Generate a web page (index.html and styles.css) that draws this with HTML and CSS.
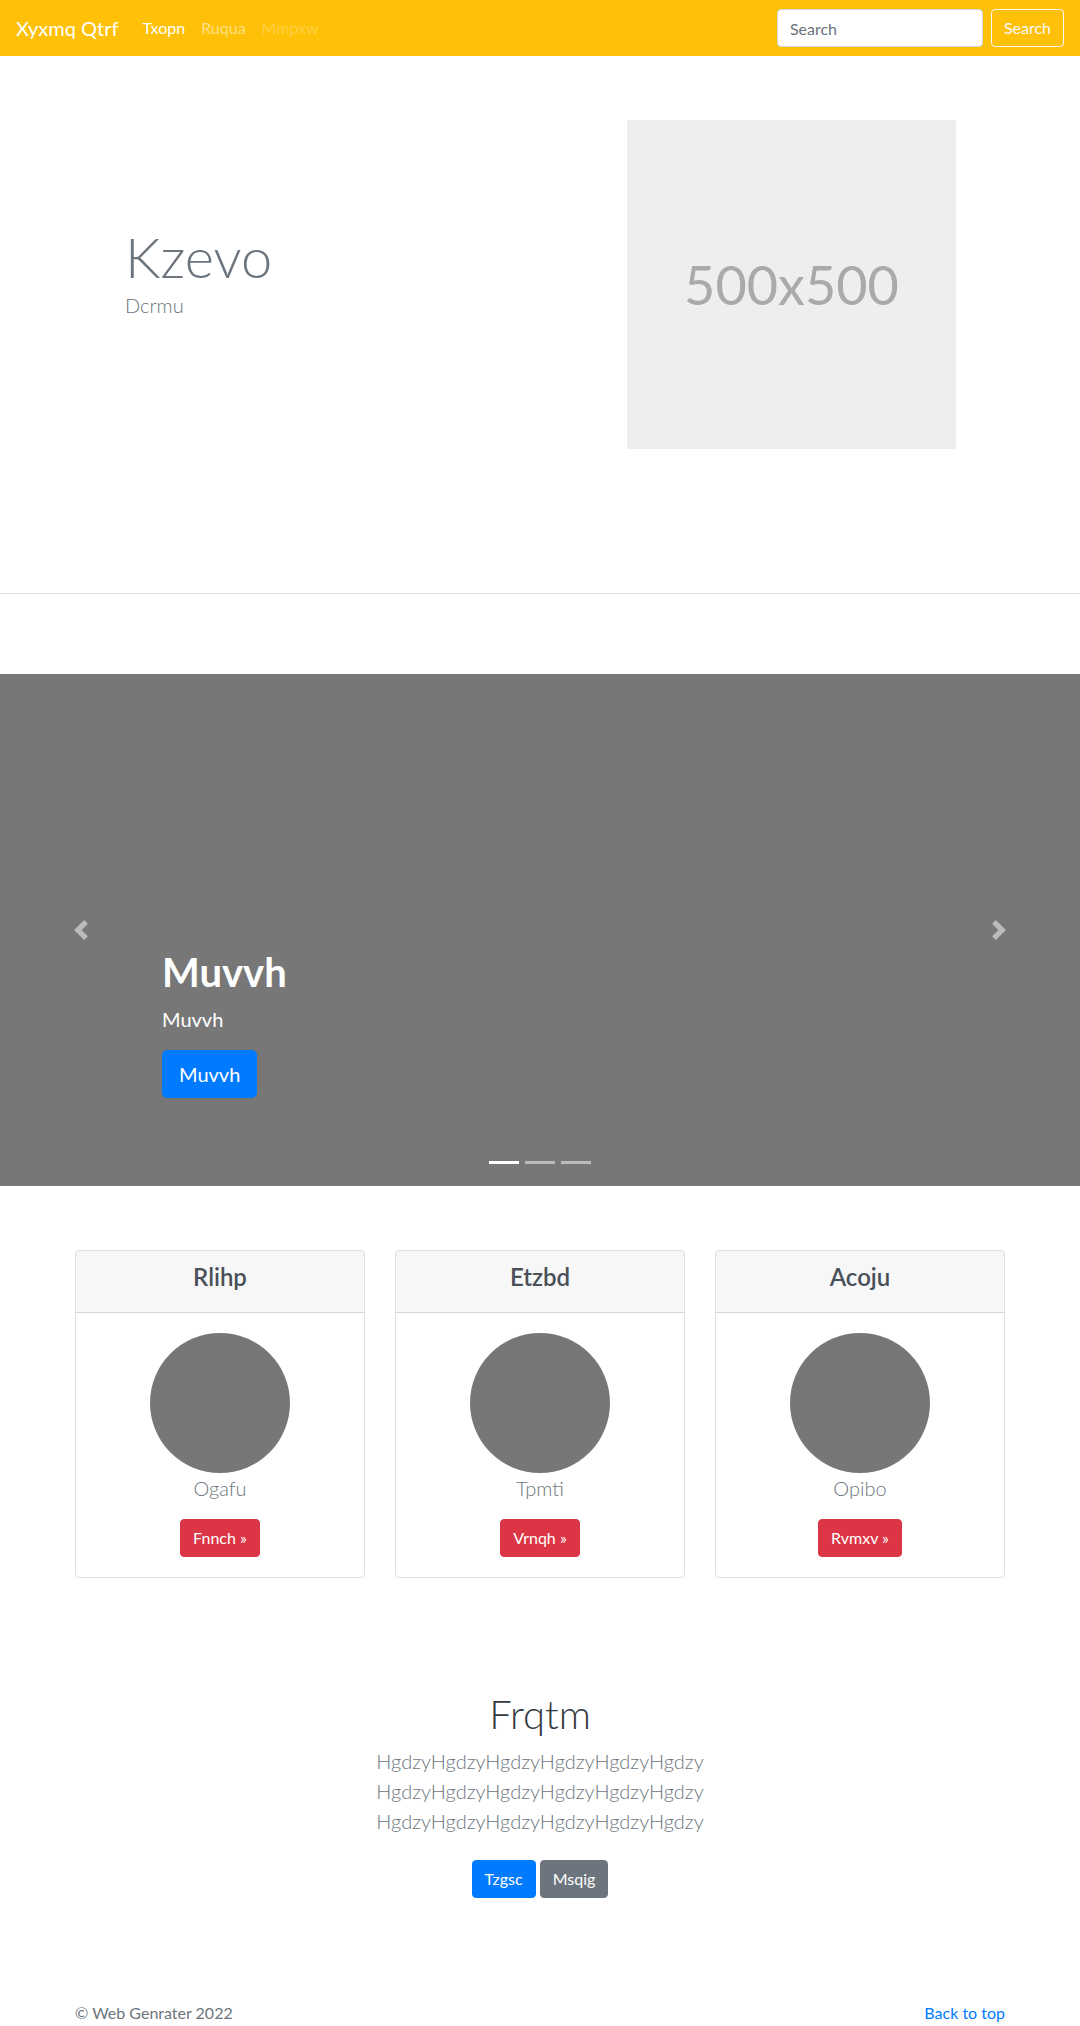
FILE: index.html
```html
<!DOCTYPE html>
<html lang="en">
<head>
<meta charset="utf-8">
<title>Xyxmq Qtrf</title>
<link rel="stylesheet" href="styles.css">
</head>
<body>
<nav class="navbar">
  <a class="brand" href="#">Xyxmq Qtrf</a>
  <ul class="nav-links">
    <li><a class="nav-link active" href="#">Txopn</a></li>
    <li><a class="nav-link" href="#">Ruqua</a></li>
    <li><a class="nav-link disabled" href="#">Mmpxw</a></li>
  </ul>
  <form class="search-form">
    <input class="search-input" type="text" placeholder="Search">
    <button class="btn btn-outline-light" type="button">Search</button>
  </form>
</nav>

<section class="hero">
  <div class="hero-row">
    <div class="hero-text">
      <h1 class="hero-title">Kzevo</h1>
      <p class="hero-lead">Dcrmu</p>
    </div>
    <div class="hero-media">
      <div class="placeholder">500x500</div>
    </div>
  </div>
</section>

<div class="carousel">
  <div class="carousel-item">
    <div class="carousel-caption">
      <h1 class="caption-title">Muvvh</h1>
      <p class="caption-text">Muvvh</p>
      <p class="caption-action"><a class="btn btn-lg btn-primary" href="#">Muvvh</a></p>
    </div>
  </div>
  <ol class="indicators">
    <li class="active"></li>
    <li></li>
    <li></li>
  </ol>
  <a class="control control-prev" href="#">
    <svg width="20" height="20" viewBox="0 0 8 8" fill="#fff"><path d="M5.25 0l-4 4 4 4 1.5-1.5L4.25 4l2.5-2.5L5.25 0z"/></svg>
  </a>
  <a class="control control-next" href="#">
    <svg width="20" height="20" viewBox="0 0 8 8" fill="#fff"><path d="M2.75 0l-1.5 1.5L3.75 4l-2.5 2.5L2.75 8l4-4-4-4z"/></svg>
  </a>
</div>

<div class="container">
  <div class="card-deck">
    <div class="card">
      <div class="card-header"><h4 class="card-title">Rlihp</h4></div>
      <div class="card-body">
        <div class="avatar"></div>
        <p class="card-lead">Ogafu</p>
        <a class="btn btn-danger" href="#">Fnnch &raquo;</a>
      </div>
    </div>
    <div class="card">
      <div class="card-header"><h4 class="card-title">Etzbd</h4></div>
      <div class="card-body">
        <div class="avatar"></div>
        <p class="card-lead">Tpmti</p>
        <a class="btn btn-danger" href="#">Vrnqh &raquo;</a>
      </div>
    </div>
    <div class="card">
      <div class="card-header"><h4 class="card-title">Acoju</h4></div>
      <div class="card-body">
        <div class="avatar"></div>
        <p class="card-lead">Opibo</p>
        <a class="btn btn-danger" href="#">Rvmxv &raquo;</a>
      </div>
    </div>
  </div>
</div>

<section class="jumbotron">
  <h1 class="jumbo-title">Frqtm</h1>
  <p class="jumbo-lead">HgdzyHgdzyHgdzyHgdzyHgdzyHgdzy<br>HgdzyHgdzyHgdzyHgdzyHgdzyHgdzy<br>HgdzyHgdzyHgdzyHgdzyHgdzyHgdzy</p>
  <p class="jumbo-actions">
    <a class="btn btn-primary" href="#">Tzgsc</a>
    <a class="btn btn-secondary" href="#">Msqig</a>
  </p>
</section>

<footer class="footer">
  <p class="copyright">&copy; Web Genrater 2022</p>
  <a class="back-top" href="#">Back to top</a>
</footer>
</body>
</html>
```

FILE: styles.css
```css
* { box-sizing: border-box; }

body {
  margin: 0;
  font-family: "Lato", "Noto Sans", sans-serif;
  font-size: 16px;
  line-height: 1.5;
  color: #212529;
  background: #fff;
}

a { text-decoration: none; }

/* Navbar */
.navbar {
  display: flex;
  align-items: center;
  height: 56px;
  padding: 8px 16px;
  background: #ffc107;
}
.brand {
  font-size: 20px;
  line-height: 30px;
  color: #fff;
  margin-right: 16px;
  padding: 5px 0;
}
.nav-links {
  display: flex;
  list-style: none;
  margin: 0;
  padding: 0;
  flex: 1;
}
.nav-link {
  display: block;
  padding: 8px;
  color: rgba(255,255,255,.5);
}
.nav-link.active { color: #fff; }
.nav-link.disabled { color: rgba(255,255,255,.25); }

.search-form {
  display: flex;
  align-items: center;
}
.search-input {
  width: 206px;
  height: 38px;
  padding: 6px 12px;
  font-family: inherit;
  font-size: 16px;
  color: #495057;
  background: #fff;
  border: 1px solid #ced4da;
  border-radius: 4px;
  margin-right: 8px;
}
.search-input::placeholder { color: #6c757d; }

.btn {
  display: inline-block;
  font-family: inherit;
  font-size: 16px;
  line-height: 24px;
  padding: 6px 12px;
  border: 1px solid transparent;
  border-radius: 4px;
  color: #fff;
  text-align: center;
  vertical-align: middle;
}
.btn-outline-light {
  background: transparent;
  color: #f8f9fa;
  border-color: #f8f9fa;
}
.btn-primary { background: #007bff; border-color: #007bff; }
.btn-secondary { background: #6c757d; border-color: #6c757d; }
.btn-danger { background: #dc3545; border-color: #dc3545; }
.btn-lg {
  font-size: 20px;
  line-height: 30px;
  padding: 8px 16px;
  border-radius: 5px;
}

/* Hero */
.hero {
  padding: 64px 0 144px;
  border-bottom: 1px solid #e3e3e3;
}
.hero-row {
  width: 930px;
  margin: 0 auto;
  display: grid;
  grid-template-columns: 465px 465px;
  align-items: center;
}
.hero-text {
  padding-left: 50px;
  padding-bottom: 26px;
}
.hero-title {
  margin: 0;
  font-size: 56px;
  font-weight: 300;
  line-height: 1.2;
  color: #6c757d;
}
.hero-lead {
  margin: 0;
  font-size: 20px;
  font-weight: 300;
  color: #6c757d;
}
.hero-media { padding-left: 87px; }
.placeholder {
  width: 329px;
  height: 329px;
  background: #eee;
  color: #aaa;
  display: flex;
  align-items: center;
  justify-content: center;
  font-size: 54px;
}

/* Carousel */
.carousel {
  position: relative;
  margin-top: 80px;
  height: 512px;
  background: #777;
}
.carousel-item {
  height: 100%;
}
.carousel-caption {
  position: absolute;
  left: 15%;
  right: 15%;
  bottom: 52px;
  padding: 20px 0;
  color: #fff;
  text-align: left;
  z-index: 10;
}
.caption-title {
  margin: 0 0 8px;
  font-size: 40px;
  font-weight: 700;
  line-height: 1.2;
}
.caption-text {
  margin: 0 0 16px;
  font-size: 20px;
}
.caption-action { margin: 0 0 16px; }

.indicators {
  position: absolute;
  left: 0;
  right: 0;
  bottom: 12px;
  display: flex;
  justify-content: center;
  list-style: none;
  margin: 0;
  padding: 0;
}
.indicators li {
  width: 30px;
  height: 23px;
  margin: 0 3px;
  border-top: 10px solid transparent;
  border-bottom: 10px solid transparent;
  background: #fff;
  background-clip: padding-box;
  opacity: .5;
}
.indicators li.active { opacity: 1; }

.control {
  position: absolute;
  top: 0;
  bottom: 0;
  width: 15%;
  display: flex;
  align-items: center;
  justify-content: center;
  opacity: .5;
}
.control-prev { left: 0; }
.control-next { right: 0; }
.control svg { display: block; }

/* Cards */
.container {
  width: 930px;
  margin: 64px auto 0;
}
.card-deck {
  display: flex;
  gap: 30px;
}
.card {
  flex: 1;
  border: 1px solid rgba(0,0,0,.125);
  border-radius: 4px;
  overflow: hidden;
  text-align: center;
}
.card-header {
  padding: 12px 20px;
  background: rgba(0,0,0,.03);
  border-bottom: 1px solid rgba(0,0,0,.125);
}
.card-title {
  margin: 0 0 8px;
  font-size: 24px;
  font-weight: 600;
  line-height: 1.2;
  color: #495057;
}
.card-body { padding: 20px; }
.avatar {
  width: 140px;
  height: 140px;
  margin: 0 auto;
  border-radius: 50%;
  background: #777;
}
.card-lead {
  margin: 0 0 16px;
  font-size: 20px;
  font-weight: 300;
  line-height: 30px;
  color: #6c757d;
}

/* Jumbotron */
.jumbotron {
  margin-top: 64px;
  padding: 48px 0 48px;
  text-align: center;
}
.jumbo-title {
  margin: 0 0 8px;
  font-size: 40px;
  font-weight: 300;
  line-height: 1.2;
  color: #343a40;
}
.jumbo-lead {
  margin: 0 0 16px;
  font-size: 20px;
  font-weight: 300;
  line-height: 30px;
  color: #6c757d;
}
.jumbo-actions { margin: 0; }
.jumbo-actions .btn { margin: 8px 0; }

/* Footer */
.footer {
  width: 930px;
  margin: 0 auto;
  padding: 47px 0 48px;
  display: flex;
  justify-content: space-between;
  align-items: baseline;
}
.copyright { margin: 0; color: #6c757d; }
.back-top { color: #007bff; }
```
